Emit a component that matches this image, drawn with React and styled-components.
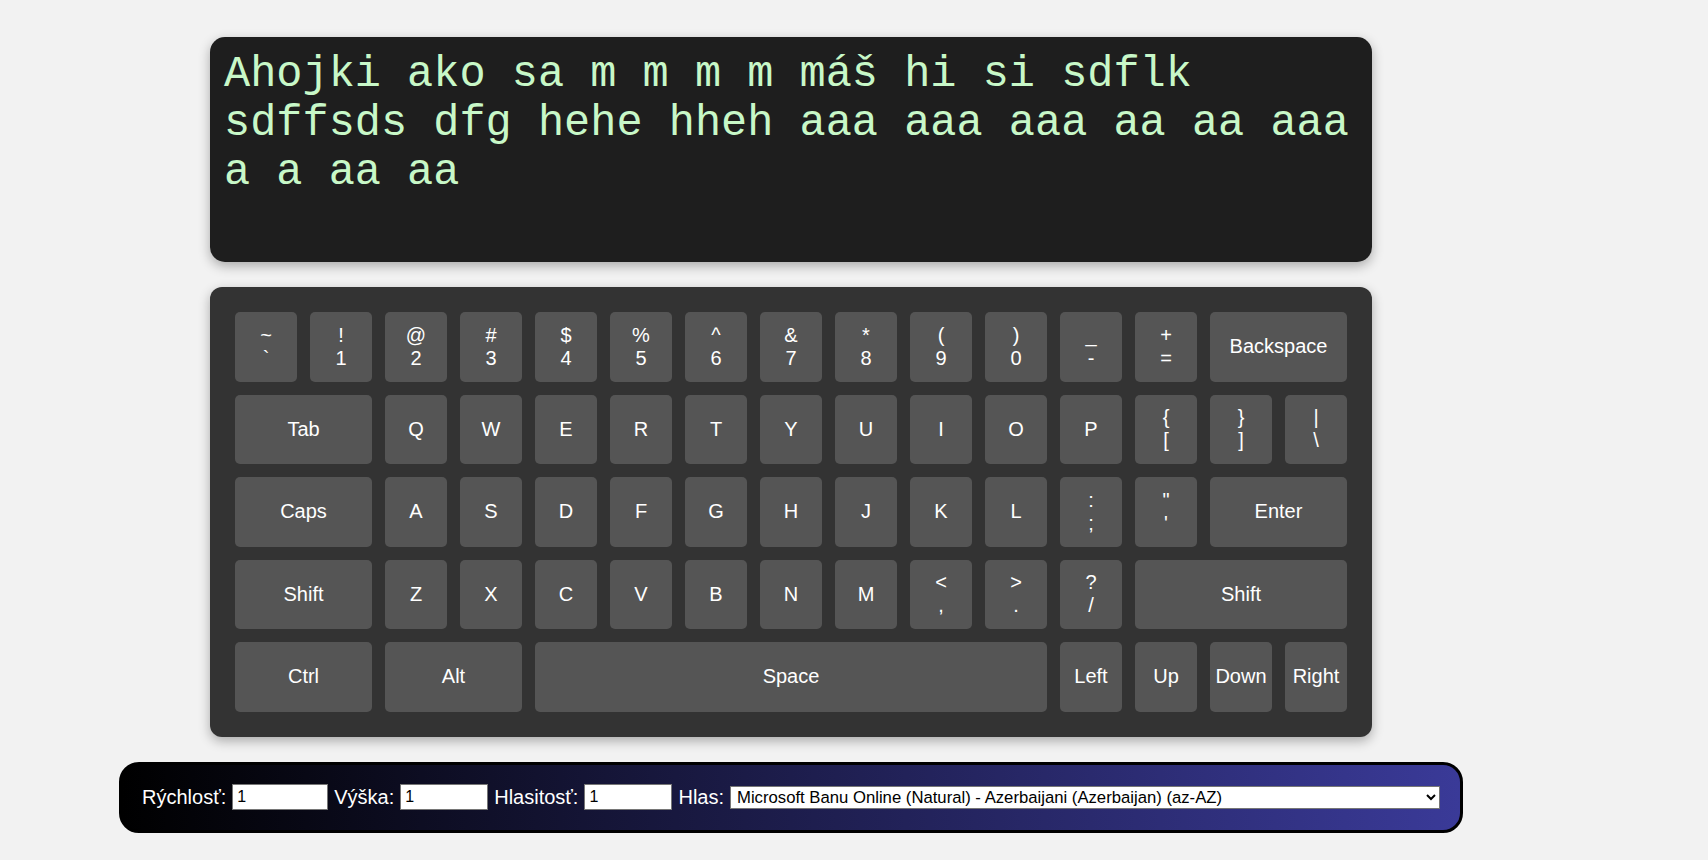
import React, { useState } from "react";
import styled, { createGlobalStyle } from "styled-components";

const GlobalStyle = createGlobalStyle`
  html, body {
    margin: 0;
    padding: 0;
    background: #f2f2f2;
    font-family: "Liberation Sans", Arial, sans-serif;
  }
`;

const rows = [
  [
    ["~", "`"], ["!", "1"], ["@", "2"], ["#", "3"], ["$", "4"], ["%", "5"],
    ["^", "6"], ["&", "7"], ["*", "8"], ["(", "9"], [")", "0"], ["_", "-"],
    ["+", "="], { label: "Backspace", span: 2 },
  ],
  [
    { label: "Tab", span: 2 },
    "Q", "W", "E", "R", "T", "Y", "U", "I", "O", "P",
    ["{", "["], ["}", "]"], ["|", "\\"],
  ],
  [
    { label: "Caps", span: 2 },
    "A", "S", "D", "F", "G", "H", "J", "K", "L",
    [":", ";"], ['"', "'"],
    { label: "Enter", span: 2 },
  ],
  [
    { label: "Shift", span: 2 },
    "Z", "X", "C", "V", "B", "N", "M",
    ["<", ","], [">", "."], ["?", "/"],
    { label: "Shift", span: 3 },
  ],
  [
    { label: "Ctrl", span: 2 },
    { label: "Alt", span: 2 },
    { label: "Space", span: 7 },
    "Left", "Up", "Down", "Right",
  ],
];

const TEXT =
  "Ahojki ako sa m m m m máš hi si sdflk sdffsds dfg hehe hheh aaa aaa aaa aa aa aaa a a aa aa";

export default function App() {
  const [rate, setRate] = useState("1");
  const [pitch, setPitch] = useState("1");
  const [volume, setVolume] = useState("1");

  return (
    <>
      <GlobalStyle />
      <Page>
        <TextPanel>{TEXT}</TextPanel>

        <Keyboard>
          {rows.map((row, r) =>
            row.map((k, i) => {
              if (Array.isArray(k)) {
                return (
                  <Key key={`${r}-${i}`} span={1}>
                    <span>{k[0]}</span>
                    <span>{k[1]}</span>
                  </Key>
                );
              }
              const item = typeof k === "string" ? { label: k, span: 1 } : k;
              return (
                <Key key={`${r}-${i}`} span={item.span}>
                  {item.label}
                </Key>
              );
            })
          )}
        </Keyboard>

        <Controls>
          <Label>Rýchlosť:</Label>
          <NumInput
            width={96}
            value={rate}
            onChange={e => setRate(e.target.value)}
          />
          <Label>Výška:</Label>
          <NumInput
            width={88}
            value={pitch}
            onChange={e => setPitch(e.target.value)}
          />
          <Label>Hlasitosť:</Label>
          <NumInput
            width={88}
            value={volume}
            onChange={e => setVolume(e.target.value)}
          />
          <Label>Hlas:</Label>
          <VoiceSelect defaultValue="banu">
            <option value="banu">
              Microsoft Banu Online (Natural) - Azerbaijani (Azerbaijan) (az-AZ)
            </option>
          </VoiceSelect>
        </Controls>
      </Page>
    </>
  );
}

const Page = styled.div`
  width: 1582px;
  padding-top: 37px;
  display: flex;
  flex-direction: column;
  align-items: center;
  gap: 25px;
`;

const TextPanel = styled.div`
  box-sizing: border-box;
  width: 1162px;
  height: 225px;
  padding: 13px 15px 12px 14px;
  background: #1e1e1e;
  border-radius: 15px;
  box-shadow: 0 4px 12px rgba(0, 0, 0, 0.3);
  color: #c8f8c8;
  font-family: "Liberation Mono", "Courier New", monospace;
  font-size: 43.6px;
  line-height: 49px;
  word-wrap: break-word;
`;

const Keyboard = styled.div`
  box-sizing: border-box;
  width: 1162px;
  padding: 25px;
  background: #333333;
  border-radius: 12px;
  box-shadow: 0 4px 12px rgba(0, 0, 0, 0.3);
  display: grid;
  grid-template-columns: repeat(15, 62px);
  grid-auto-rows: 69.5px;
  column-gap: 13px;
  row-gap: 13px;
`;

const Key = styled.button`
  grid-column: span ${p => p.span};
  display: flex;
  flex-direction: column;
  align-items: center;
  justify-content: center;
  padding: 0;
  border: none;
  border-radius: 5px;
  background: #555555;
  color: #ffffff;
  font-family: "Liberation Sans", Arial, sans-serif;
  font-size: 20px;
  line-height: 23px;
  cursor: pointer;
`;

const Controls = styled.div`
  box-sizing: border-box;
  width: 1344px;
  height: 71px;
  padding: 0 20px;
  border: 3px solid #000000;
  border-radius: 20px;
  background: linear-gradient(to right, #000000, #3a3a98);
  display: flex;
  align-items: center;
  gap: 6px;
`;

const Label = styled.label`
  color: #ffffff;
  font-family: "Liberation Sans", Arial, sans-serif;
  font-size: 20px;
`;

const NumInput = styled.input`
  box-sizing: border-box;
  width: ${p => p.width}px;
  height: 26px;
  padding: 1px 4px;
  border: 1px solid #767676;
  background: #ffffff;
  color: #000000;
  font-family: "Liberation Sans", Arial, sans-serif;
  font-size: 16px;
`;

const VoiceSelect = styled.select`
  flex: 1;
  box-sizing: border-box;
  height: 23px;
  padding: 0 2px;
  border: 1px solid #767676;
  border-radius: 0;
  background: #ffffff;
  color: #000000;
  font-family: "Liberation Sans", Arial, sans-serif;
  font-size: 16.7px;
`;
